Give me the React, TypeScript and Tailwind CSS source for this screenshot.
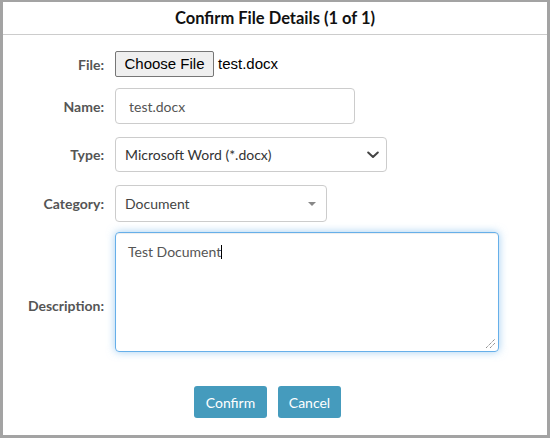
import React from 'react';

const font = { fontFamily: 'Lato, "Open Sans", sans-serif' };

function Label({ text, extra = '' }: { text: string; extra?: string }) {
  return (
    <div className={`w-[101px] shrink-0 text-right text-[14px] font-bold text-[#555] ${extra}`}>
      {text}
    </div>
  );
}

export default function App() {
  return (
    <div
      className="w-[550px] h-[438px] bg-white border-x-[3px] border-t-2 border-b-[3px] border-[#a3a3a3] flex flex-col"
      style={font}
    >
      {/* header */}
      <div className="h-[33px] border-b border-[#cccccc] flex items-center justify-center text-[16.5px] font-bold text-[#111]">
        Confirm File Details (1 of 1)
      </div>

      {/* file */}
      <div className="flex items-center mt-[16px]">
        <Label text="File:" />
        <div className="ml-[11px] flex items-center" style={{ fontFamily: '"Liberation Sans", Arial, sans-serif' }}>
          <div className="h-[26px] w-[99px] flex items-center justify-center bg-[#efefef] border border-[#767676] rounded-[2px] text-[15px] text-black">
            Choose File
          </div>
          <span className="ml-[4px] text-[15px] text-black">test.docx</span>
        </div>
      </div>

      {/* name */}
      <div className="flex items-center mt-[11px]">
        <Label text="Name:" />
        <div className="ml-[11px] h-[36px] w-[240px] border border-[#cccccc] rounded-[4px] flex items-center pl-[13px] text-[14px] text-[#555]">
          test.docx
        </div>
      </div>

      {/* type */}
      <div className="flex items-center mt-[13px]">
        <Label text="Type:" />
        <div className="ml-[11px] h-[35px] w-[272px] border border-[#cccccc] rounded-[4px] flex items-center justify-between pl-[9px] pr-[7px] text-[14px] text-[#333]">
          <span>Microsoft Word (*.docx)</span>
          <svg width="12" height="8" viewBox="0 0 12 8" fill="none">
            <path d="M1.2 1.5L6 6L10.8 1.5" stroke="#444" strokeWidth="2" strokeLinecap="round" strokeLinejoin="round" />
          </svg>
        </div>
      </div>

      {/* category */}
      <div className="flex items-center mt-[13px]">
        <Label text="Category:" />
        <div className="ml-[11px] h-[37px] w-[212px] border border-[#cccccc] rounded-[4px] flex items-center justify-between pl-[9px] pr-[10px] text-[14px] text-[#444]">
          <span>Document</span>
          <svg width="8" height="4" viewBox="0 0 8 4">
            <path d="M0 0H8L4 4Z" fill="#888" />
          </svg>
        </div>
      </div>

      {/* description */}
      <div className="flex items-center mt-[10px]">
        <Label text="Description:" extra="mt-[26px]" />
        <div className="relative ml-[11px] h-[120px] w-[384px] border border-[#66afe9] rounded-[4px] shadow-[inset_0_1px_1px_rgba(0,0,0,0.075),0_0_8px_rgba(102,175,233,0.6)] pl-[12px] pt-[8px] text-[14px] text-[#555]">
          <span>Test Document</span>
          <span className="inline-block w-px h-[14px] bg-black align-[-2px]" />
          <svg className="absolute right-[2px] bottom-[2px]" width="11" height="11" viewBox="0 0 11 11">
            <path d="M1 10L10 1M5 10L10 5" stroke="#777" strokeWidth="1" strokeDasharray="1.2 0.8" />
          </svg>
        </div>
      </div>

      {/* buttons */}
      <div className="flex gap-[11px] pl-[191px] mt-[34px]">
        <button className="h-[32px] w-[73px] rounded-[3px] bg-[#459bbd] text-white text-[14px]">Confirm</button>
        <button className="h-[32px] w-[63px] rounded-[3px] bg-[#459bbd] text-white text-[14px]">Cancel</button>
      </div>
    </div>
  );
}
